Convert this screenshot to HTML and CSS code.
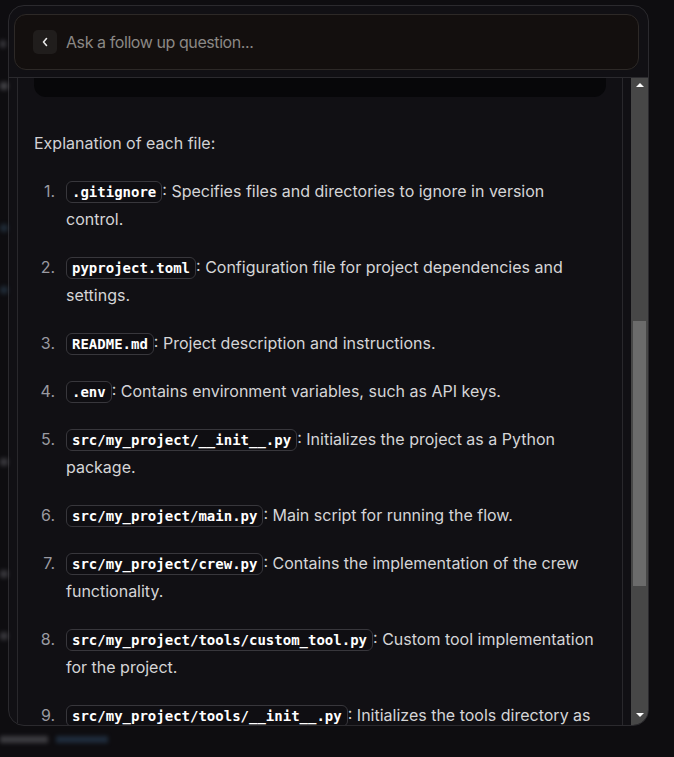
FILE: index.html
```html
<!DOCTYPE html>
<html lang="en">
<head>
<meta charset="utf-8">
<title>Follow up</title>
<link rel="stylesheet" href="styles.css">
</head>
<body>
<div class="page">
  <div class="edge">
    <span class="blob b1"></span>
    <span class="blob b2"></span>
    <span class="blob b3"></span>
    <span class="blob b4"></span>
    <span class="blob b5"></span>
    <span class="blob b6"></span>
    <span class="blob b7"></span>
  </div>
  <div class="main">
    <div class="panel">
      <div class="head">
        <div class="ask">
          <span class="back">
            <svg width="8" height="10" viewBox="0 0 8 10"><path d="M5.5 1.5 L2.5 5 L5.5 8.5" fill="none" stroke="#e8e8e8" stroke-width="1.6" stroke-linecap="round" stroke-linejoin="round"/></svg>
          </span>
          <span class="placeholder">Ask a follow up question...</span>
        </div>
      </div>
      <div class="body">
        <div class="scrollarea">
          <div class="card">
            <div class="codeend"></div>
            <p class="intro">Explanation of each file:</p>
            <ol class="files">
              <li><div class="t"><code>.gitignore</code>: Specifies files and directories to ignore in version control.</div></li>
              <li><div class="t"><code>pyproject.toml</code>: Configuration file for project dependencies and settings.</div></li>
              <li><div class="t"><code>README.md</code>: Project description and instructions.</div></li>
              <li><div class="t"><code>.env</code>: Contains environment variables, such as API keys.</div></li>
              <li><div class="t"><code>src/my_project/__init__.py</code>: Initializes the project as a Python package.</div></li>
              <li><div class="t"><code>src/my_project/main.py</code>: Main script for running the flow.</div></li>
              <li><div class="t"><code>src/my_project/crew.py</code>: Contains the implementation of the crew functionality.</div></li>
              <li><div class="t"><code>src/my_project/tools/custom_tool.py</code>: Custom tool implementation for the project.</div></li>
              <li><div class="t"><code>src/my_project/tools/__init__.py</code>: Initializes the tools directory as a Python package.</div></li>
              <li><div class="t"><code>src/my_project/config/agents.yaml</code>: Configuration for agents.</div></li>
            </ol>
          </div>
        </div>
        <div class="scrollbar">
          <span class="arrow up"></span>
          <div class="track"><div class="thumb"></div></div>
          <span class="arrow down"></span>
        </div>
      </div>
    </div>
    <div class="under">
      <span class="u1"></span>
      <span class="u2"></span>
    </div>
  </div>
</div>
</body>
</html>
```

FILE: styles.css
```css
html, body {
  margin: 0;
  padding: 0;
  background: #0e0d10;
  height: 757px;
  overflow: hidden;
  font-family: Inter, "Liberation Sans", sans-serif;
}

.page {
  display: flex;
  padding-top: 5px;
}

.edge {
  width: 8px;
  flex: none;
  display: flex;
  flex-direction: column;
  gap: 14px;
  padding-top: 25px;
  filter: blur(2px);
  opacity: 0.55;
}

.blob {
  display: block;
  height: 8px;
  background: #5a5a60;
  border-radius: 3px;
}
.b1 { margin-top: 10px; width: 6px; }
.b2 { margin-top: 20px; background: #6a6a70; }
.b3 { margin-top: 120px; background: #2d4256; }
.b4 { margin-top: 40px; background: #2d4256; }
.b5 { margin-top: 150px; }
.b6 { margin-top: 90px; }
.b7 { margin-top: 40px; }

.main {
  display: flex;
  flex-direction: column;
}

.panel {
  box-sizing: border-box;
  width: 641px;
  height: 721px;
  border: 1px solid #2b2a2e;
  border-radius: 16px;
  background: #111014;
  display: flex;
  flex-direction: column;
  overflow: hidden;
}

.head {
  padding: 8px 9px 7px 5px;
  border-bottom: 1px solid #2b2a2e;
}

.ask {
  box-sizing: border-box;
  height: 56px;
  border: 1px solid #2d2927;
  border-radius: 12px;
  background: #130f0e;
  display: flex;
  align-items: center;
  padding-left: 18px;
  gap: 9px;
}

.back {
  width: 24px;
  height: 24px;
  border-radius: 5px;
  background: #201d1c;
  display: flex;
  align-items: center;
  justify-content: center;
}

.placeholder {
  font-size: 16px;
  color: #8b8885;
  letter-spacing: -0.42px;
}

.body {
  flex: 1;
  min-height: 0;
  display: flex;
}

.scrollarea {
  flex: 1;
  min-width: 0;
  padding: 0 8px;
  overflow: hidden;
}

.card {
  height: 100%;
  border-left: 1px solid #29282c;
  border-right: 1px solid #29282c;
  padding: 0 16px;
  color: #d5d5d7;
  font-size: 16px;
  line-height: 28px;
}

.codeend {
  height: 19px;
  background: #070709;
  border-radius: 0 0 12px 12px;
}

.intro {
  margin: 32px 0 0;
  color: #d2d2d4;
}

.files {
  list-style: none;
  margin: 20px 0 0;
  padding: 0;
  counter-reset: item;
}

.files li {
  display: flex;
  margin-top: 20px;
  counter-increment: item;
}

.files li:first-child {
  margin-top: 0;
}

.files li::before {
  content: counter(item) ".";
  flex: 0 0 21px;
  margin-right: 11px;
  text-align: right;
  color: #9a9aa1;
}

.t {
  flex: 1;
  min-width: 0;
  padding-right: 6px;
}

code {
  font-family: "DejaVu Sans Mono", "Liberation Mono", monospace;
  font-weight: 700;
  font-size: 14px;
  line-height: 16px;
  color: #ffffff;
  background: #0f0e12;
  border: 1px solid #38373c;
  border-radius: 6px;
  padding: 2px 5px;
}

.scrollbar {
  width: 17px;
  flex: none;
  background: #474747;
  display: flex;
  flex-direction: column;
  align-items: center;
}

.arrow {
  flex: none;
  width: 0;
  height: 0;
  border-left: 4px solid transparent;
  border-right: 4px solid transparent;
}

.arrow.up {
  margin: 5px 0 6px;
  border-bottom: 4px solid #ffffff;
}

.arrow.down {
  margin: 6px 0 8px;
  border-top: 4px solid #ffffff;
}

.track {
  flex: 1;
  width: 13px;
}

.thumb {
  margin-top: 228px;
  height: 265px;
  background: #6b6b6b;
}

.under {
  display: flex;
  gap: 8px;
  padding-top: 10px;
  margin-left: -8px;
  filter: blur(2px);
  opacity: 0.5;
}

.u1 {
  width: 48px;
  height: 7px;
  background: #6a6a70;
}

.u2 {
  width: 52px;
  height: 7px;
  background: #2f4a66;
}
```
